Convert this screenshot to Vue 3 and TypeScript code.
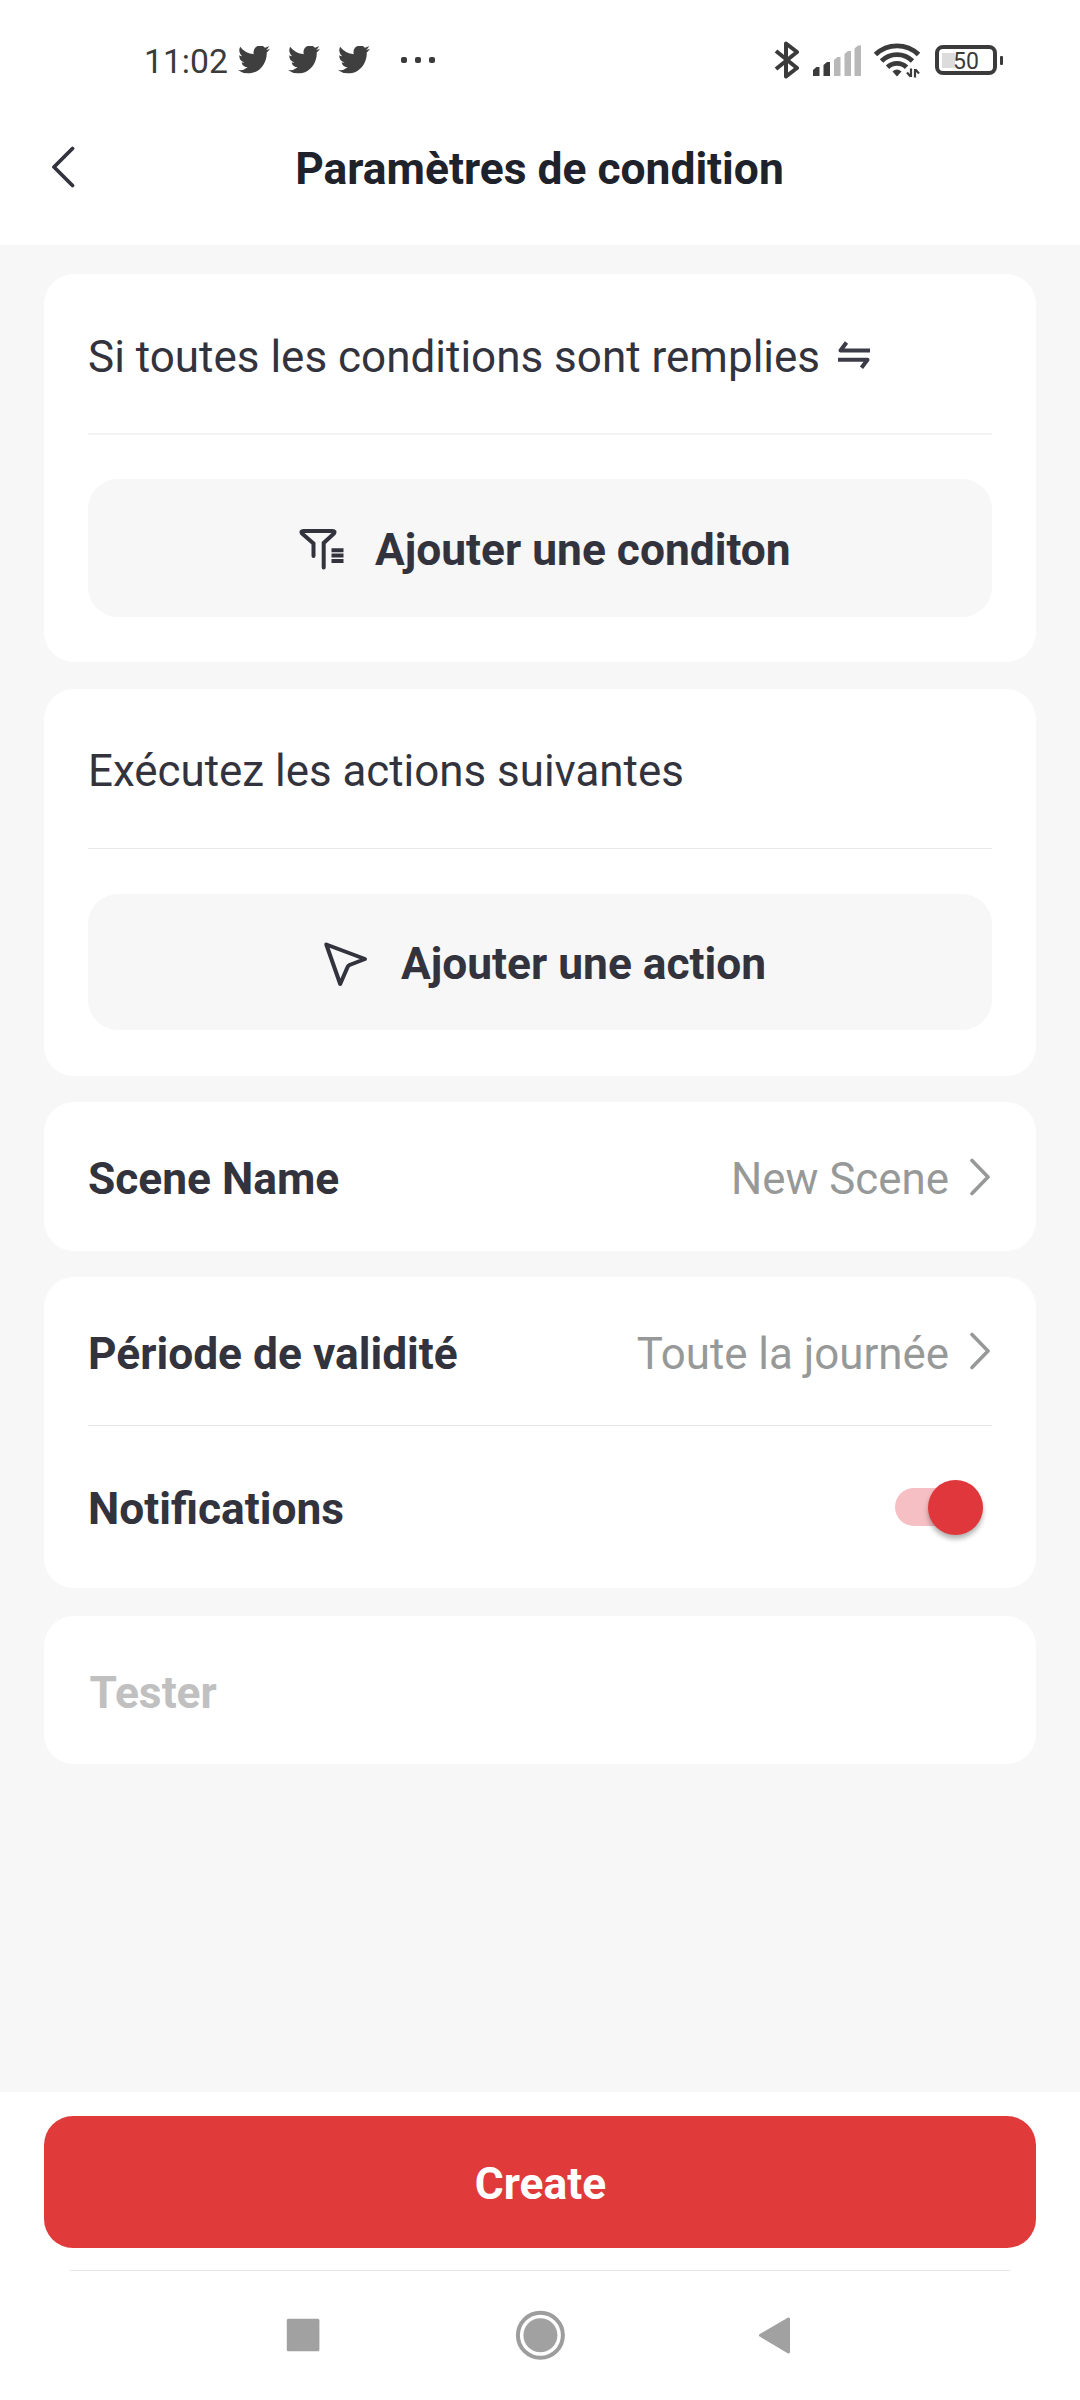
<script setup lang="ts">
import { ref } from 'vue'

const notifications = ref<boolean>(true)
const birds = [0, 1, 2]
const signalBars = [
  { x: 0, h: 9, on: true },
  { x: 10.5, h: 14, on: true },
  { x: 21, h: 19, on: false },
  { x: 31.5, h: 25, on: false },
  { x: 41.5, h: 30.5, on: false },
]
</script>

<template>
  <div class="screen">
    <div class="status">
      <span class="clock">11:02</span>
      <svg v-for="b in birds" :key="b" class="bird" viewBox="0 2.6 24 19.6" preserveAspectRatio="none">
        <path d="M23.953 4.57a10 10 0 01-2.825.775 4.958 4.958 0 002.163-2.723c-.951.555-2.005.959-3.127 1.184a4.92 4.92 0 00-8.384 4.482C7.69 8.095 4.067 6.13 1.64 3.162a4.822 4.822 0 00-.666 2.475c0 1.71.87 3.213 2.188 4.096a4.904 4.904 0 01-2.228-.616v.06a4.923 4.923 0 003.946 4.827 4.996 4.996 0 01-2.212.085 4.936 4.936 0 004.604 3.417 9.867 9.867 0 01-6.102 2.105c-.39 0-.779-.023-1.17-.067a13.995 13.995 0 007.557 2.209c9.053 0 13.998-7.496 13.998-13.985 0-.21 0-.42-.015-.63A9.935 9.935 0 0024 4.59z" />
      </svg>
      <span class="dots"><i /><i /><i /></span>
      <span class="spacer" />
      <svg class="bt" viewBox="0 0 26 38" fill="none">
        <path d="M2 10 L23 27 L12 35.5 V2.5 L23 11 L2 28" />
      </svg>
      <svg class="signal" viewBox="0 0 49 31">
        <path
          v-for="bar in signalBars"
          :key="bar.x"
          :d="`M${bar.x} 31 V${34 - bar.h} L${bar.x + 3.5} ${31 - bar.h} H${bar.x + 6.5} V31 Z`"
          :class="bar.on ? 'on' : 'off'"
        />
      </svg>
      <svg class="wifi" viewBox="0 0 46 36">
        <g fill="none" stroke="#3b3b3b" stroke-width="4.8">
          <path d="M1.5 12.5 A31 31 0 0 1 44.5 12.5" />
          <path d="M7.5 19 A22 22 0 0 1 38.5 19" />
          <path d="M13.5 25.3 A13.5 13.5 0 0 1 32.5 25.3" />
        </g>
        <path d="M18.5 29.5 Q23 25.5 27.5 29.5 L23 34.5 Z" fill="#3b3b3b" />
        <path d="M37 26.5 V35 M36.6 34.5 L33 30.5 M41 35.5 V27 M41.4 27.5 L45 31.5" fill="none" stroke="#3b3b3b" stroke-width="2.2" />
      </svg>
      <span class="battery"><span class="level" /><span class="pct">50</span></span>
      <span class="tip" />
    </div>

    <header class="header">
      <svg class="back" viewBox="0 0 26 42" fill="none"><path d="M22.5 2.5 L4 21 L22.5 39.5" /></svg>
      <h1>Paramètres de condition</h1>
    </header>

    <main class="body">
      <section class="card card-if">
        <div class="head">
          <span>Si toutes les conditions sont remplies</span>
          <svg class="swap" viewBox="0 0 34 30" fill="none">
            <path d="M33 10.5 H3.5 L9.5 2.5 M1 19.8 H30.5 L24.5 27.8" />
          </svg>
        </div>
        <button class="add add-condition">
          <svg class="funnel" viewBox="0 0 46 42" fill="none">
            <path d="M14.5 28 V15.5 L3 5.5 Q1.5 3 4.5 3 H33.5 Q36.5 3 35 5.5 L24.7 15 V39.5" />
            <path d="M32.5 22.2 H44.5 M32.5 27.5 H44.5 M32.5 33 H44.5" />
          </svg>
          <span>Ajouter une conditon</span>
        </button>
      </section>

      <section class="card card-then">
        <div class="head"><span>Exécutez les actions suivantes</span></div>
        <button class="add add-action">
          <svg class="cursor" viewBox="0 0 46 46" fill="none">
            <path d="M3.3 3.5 L42 18 L26.5 24 Q25.2 24.6 24.6 26 L17.2 43 Z" />
          </svg>
          <span>Ajouter une action</span>
        </button>
      </section>

      <section class="card card-name">
        <div class="row">
          <b>Scene Name</b>
          <span class="value">New Scene</span>
          <svg class="chev" viewBox="0 0 22 38" fill="none"><path d="M3 2.5 L19 19 L3 35.5" /></svg>
        </div>
      </section>

      <section class="card card-period">
        <div class="row ruled">
          <b>Période de validité</b>
          <span class="value">Toute la journée</span>
          <svg class="chev" viewBox="0 0 22 38" fill="none"><path d="M3 2.5 L19 19 L3 35.5" /></svg>
        </div>
        <div class="row tall">
          <b>Notifications</b>
          <span class="toggle" :class="{ on: notifications }" @click="notifications = !notifications"><i /></span>
        </div>
      </section>

      <section class="card card-test">
        <div class="row"><b class="muted">Tester</b></div>
      </section>
    </main>

    <footer class="footer">
      <button class="create"><span>Create</span></button>
      <div class="line" />
      <nav class="nav">
        <svg viewBox="0 0 60 60"><rect x="13.8" y="13.7" width="32.6" height="32.6" rx="1.5" /></svg>
        <svg viewBox="0 0 60 60">
          <circle cx="30.4" cy="30.3" r="22.5" fill="none" stroke="#9d9d9d" stroke-width="4" />
          <circle cx="30.4" cy="30.3" r="17" />
        </svg>
        <svg viewBox="0 0 60 60"><path d="M15.5 30.3 L43.5 14 V47 Z" stroke="#a1a1a1" stroke-width="3" stroke-linejoin="round" /></svg>
      </nav>
    </footer>
  </div>
</template>

<style>
body {
  margin: 0;
  background: #fff;
}
</style>

<style scoped>
* {
  box-sizing: border-box;
}
.screen {
  width: 1080px;
  height: 2400px;
  display: flex;
  flex-direction: column;
  background: #fff;
  font-family: Roboto, "Noto Sans", sans-serif;
  font-size: 44px;
  line-height: 52px;
  color: #32333d;
  overflow: hidden;
}
svg {
  display: block;
  flex: none;
}
button {
  border: 0;
  padding: 0;
  font: inherit;
  color: inherit;
}
span,
b,
h1 {
  white-space: nowrap;
}

.status {
  height: 94px;
  padding: 26px 77px 0 144px;
  display: flex;
  align-items: center;
  flex: none;
}
.clock {
  font-size: 33.7px;
  line-height: 40px;
  color: #3b3b3b;
  width: 94px;
  margin-top: 3px;
}
.bird {
  width: 32px;
  height: 28px;
  margin-right: 18px;
  fill: #3f3f3f;
}
.dots {
  display: flex;
  gap: 8px;
  margin-left: 13px;
}
.dots i {
  width: 6px;
  height: 6px;
  border-radius: 2px;
  background: #3b3b3b;
}
.spacer {
  flex: 1;
}
.bt {
  width: 26px;
  height: 38px;
  margin-right: 13px;
}
.bt path {
  stroke: #3b3b3b;
  stroke-width: 4;
  stroke-linejoin: round;
}
.signal {
  width: 49px;
  height: 31px;
  margin-right: 12px;
}
.signal .on {
  fill: #3b3b3b;
}
.signal .off {
  fill: #b8b8b8;
}
.wifi {
  width: 46px;
  height: 36px;
  margin-right: 15px;
}
.battery {
  width: 62px;
  height: 30px;
  border: 4px solid #3b3b3b;
  border-radius: 8px;
  display: flex;
  align-items: center;
  padding-left: 3px;
}
.level {
  width: 13px;
  height: 15px;
  background: #dcdcdc;
}
.pct {
  font-size: 23px;
  line-height: 22px;
  color: #3b3b3b;
  margin-left: -2px;
  margin-top: 3px;
}
.tip {
  width: 3px;
  height: 9px;
  margin-left: 3px;
  border-radius: 1px;
  background: #3b3b3b;
}

.header {
  height: 151px;
  flex: none;
  display: flex;
  align-items: center;
  padding: 0 50px 1px;
}
.back {
  width: 26px;
  height: 42px;
  margin-top: -4px;
}
.back path {
  stroke: #32333d;
  stroke-width: 3.8;
  stroke-linecap: round;
  stroke-linejoin: round;
}
h1 {
  flex: 1;
  margin: 0 27px 0 0;
  text-align: center;
  font-size: 44.35px;
  font-weight: 700;
  color: #20222b;
}

.body {
  flex: 1;
  background: #f7f7f7;
  padding: 29px 44px 0;
}
.card {
  background: #fff;
  border-radius: 30px;
  padding: 0 44px;
}
.card-if {
  height: 388px;
  margin-bottom: 27px;
}
.card-then {
  height: 387px;
  margin-bottom: 26px;
}
.card-name {
  height: 149px;
  margin-bottom: 26px;
}
.card-period {
  height: 311px;
  margin-bottom: 28px;
}
.card-test {
  height: 148px;
}
.head {
  height: 161px;
  display: flex;
  align-items: center;
  padding-top: 6px;
  border-bottom: 2px solid #f2f2f2;
}
.card-then .head {
  height: 160px;
  padding-top: 4px;
  border-bottom: 1px solid #e8e8e8;
  font-size: 43.88px;
}
.swap {
  width: 34px;
  height: 30px;
  margin: -4px 0 0 17px;
}
.swap path {
  stroke: #3b3c47;
  stroke-width: 4;
  stroke-linejoin: round;
}
.add {
  display: flex;
  align-items: center;
  width: 100%;
  border-radius: 30px;
  background: #f7f7f8;
  font-size: 44.3px;
  font-weight: 700;
}
.add-condition {
  height: 138px;
  margin-top: 44px;
  padding-left: 211px;
}
.add-action {
  height: 136px;
  margin-top: 45px;
  padding-left: 235px;
}
.funnel {
  width: 46px;
  height: 42px;
  margin: 2px 30px 0 0;
}
.funnel path {
  stroke: #32333d;
  stroke-width: 4;
}
.funnel path:first-child {
  stroke-linecap: round;
}
.cursor {
  width: 46px;
  height: 46px;
  margin: 4px 32px 0 0;
}
.cursor path {
  stroke: #32333d;
  stroke-width: 4;
  stroke-linejoin: round;
}
.add span {
  margin-top: 3px;
}

.row {
  height: 149px;
  display: flex;
  align-items: center;
}
.row b {
  flex: 1;
  font-size: 44.3px;
  font-weight: 700;
  margin-top: 5px;
}
.ruled {
  border-bottom: 1px solid #e6e6e6;
}
.tall {
  height: 162px;
}
.row.tall b {
  margin-top: 4px;
}
.value {
  color: #979999;
  font-size: 43.85px;
  margin-top: 5px;
  margin-right: 20px;
}
.chev {
  width: 22px;
  height: 38px;
  margin: 0 1px 0 0;
}
.chev path {
  stroke: #979999;
  stroke-width: 3.6;
  stroke-linecap: round;
  stroke-linejoin: round;
}
.row .muted {
  color: #c0c0c0;
  padding-left: 1.5px;
  margin-top: 4px;
}
.toggle {
  width: 88px;
  height: 38px;
  margin-right: 9px;
  border-radius: 19px;
  background: #d5d5d5;
  display: flex;
  align-items: center;
}
.toggle.on {
  background: #f6bfc3;
  justify-content: flex-end;
}
.toggle i {
  width: 55px;
  height: 55px;
  border-radius: 50%;
  background: #fff;
  box-shadow: 0 4px 5px rgba(0, 0, 0, 0.3);
}
.toggle.on i {
  background: #df373b;
}

.footer {
  height: 308px;
  flex: none;
  padding: 24px 44px 0;
  background: #fff;
}
.create {
  display: block;
  width: 100%;
  height: 132px;
  border-radius: 29px;
  background: #e03a3b;
  color: #fff;
  font-size: 44.3px;
  font-weight: 700;
  padding: 4px 0 0 1px;
}
.line {
  height: 1px;
  margin: 22px 26px 0;
  background: #e6e6e6;
}
.nav {
  display: flex;
  justify-content: space-between;
  padding: 34px 231px 0 229px;
}
.nav svg {
  width: 60px;
  height: 60px;
  fill: #a1a1a1;
}
.nav svg:nth-child(2) {
  margin-left: 2px;
}
</style>
